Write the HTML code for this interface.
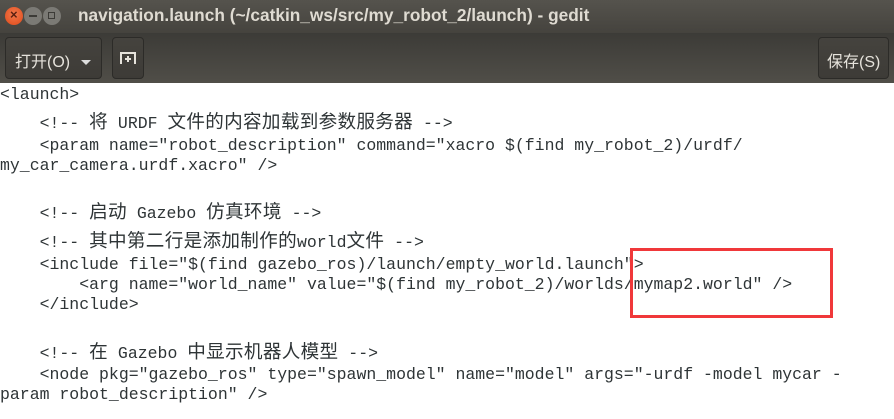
<!DOCTYPE html>
<html><head><meta charset="utf-8"><style>
body{margin:0;width:894px;height:419px;overflow:hidden;background:#fff;position:relative;font-family:"Liberation Sans","Noto Sans CJK SC",sans-serif}
#title{position:absolute;left:0;top:0;width:894px;height:33px;background:linear-gradient(#55534d,#45433e)}
#tb{position:absolute;left:0;top:33px;width:894px;height:50px;background:linear-gradient(#3c3b37,#504e48)}
.c{position:absolute;top:7px;width:18px;height:18px;border-radius:50%}
.ttl{position:absolute;left:78px;top:5px;color:#dfdbd2;font-weight:bold;font-size:17.3px;white-space:nowrap}
.btn{position:absolute;border:1px solid #2c2b28;border-radius:4px;background:linear-gradient(#45433e,#3d3b37);color:#e6e3dc;font-size:16px;box-sizing:border-box}
.l{position:absolute;left:0;font-family:"Liberation Mono","Noto Sans CJK SC",monospace;font-size:16.5px;color:#2e3436;white-space:pre;line-height:20px}
.k{letter-spacing:0.3px;font-size:18.6px;font-family:"Noto Sans CJK SC",sans-serif}
#box{position:absolute;left:630px;top:248px;width:197px;height:64px;border:3px solid #f0383a}
</style></head><body>
<div id="title">
<div class="c" style="left:5px;background:radial-gradient(circle at 50% 40%,#f2784b,#de4a1a)"><span style="position:absolute;left:5px;top:0px;color:#5a2010;font-size:13px;font-weight:bold">×</span></div>
<div class="c" style="left:24px;background:#7b7a75"><span style="position:absolute;left:5px;top:8px;width:8px;height:2px;background:#3c3b37"></span></div>
<div class="c" style="left:43px;background:#7b7a75"><span style="position:absolute;left:5px;top:5px;width:5px;height:5px;border:1.5px solid #3c3b37"></span></div>
<div class="ttl">navigation.launch (~/catkin_ws/src/my_robot_2/launch) - gedit</div>
</div>
<div id="tb">
<div class="btn" style="left:5px;top:4px;width:97px;height:42px;padding:10px 0 0 9px">打开(O) <span style="display:inline-block;margin-left:6px;width:0;height:0;border-left:5px solid transparent;border-right:5px solid transparent;border-top:5px solid #ddd;vertical-align:middle"></span></div>
<div class="btn" style="left:112px;top:4px;width:32px;height:42px">
<svg width="30" height="40" viewBox="0 0 30 40" style="position:absolute;left:0;top:0"><path d="M8 26V15H22V26M15 18V24M12 21H18" stroke="#e6e3dc" stroke-width="2" fill="none"/></svg></div>
<div class="btn" style="left:818px;top:4px;width:71px;height:42px;padding:10px 0 0 8px">保存(S)</div>
</div>
<div class="l" style="top:85px">&lt;launch&gt;</div>
<div class="l" style="top:111px">    &lt;!-- <span class="k">将</span> URDF <span class="k">文件的内容加载到参数服务器</span> --&gt;</div>
<div class="l" style="top:136px">    &lt;param name="robot_description" command="xacro $(find my_robot_2)/urdf/</div>
<div class="l" style="top:156px">my_car_camera.urdf.xacro" /&gt;</div>
<div class="l" style="top:201px">    &lt;!-- <span class="k">启动</span> Gazebo <span class="k">仿真环境</span> --&gt;</div>
<div class="l" style="top:230px">    &lt;!-- <span class="k">其中第二行是添加制作的</span>world<span class="k">文件</span> --&gt;</div>
<div class="l" style="top:255px">    &lt;include file="$(find gazebo_ros)/launch/empty_world.launch"&gt;</div>
<div class="l" style="top:275px">        &lt;arg name="world_name" value="$(find my_robot_2)/worlds/mymap2.world" /&gt;</div>
<div class="l" style="top:295px">    &lt;/include&gt;</div>
<div class="l" style="top:341px">    &lt;!-- <span class="k">在</span> Gazebo <span class="k">中显示机器人模型</span> --&gt;</div>
<div class="l" style="top:365px">    &lt;node pkg="gazebo_ros" type="spawn_model" name="model" args="-urdf -model mycar -</div>
<div class="l" style="top:385px">param robot_description" /&gt;</div>
<div id="box"></div>
</body></html>
